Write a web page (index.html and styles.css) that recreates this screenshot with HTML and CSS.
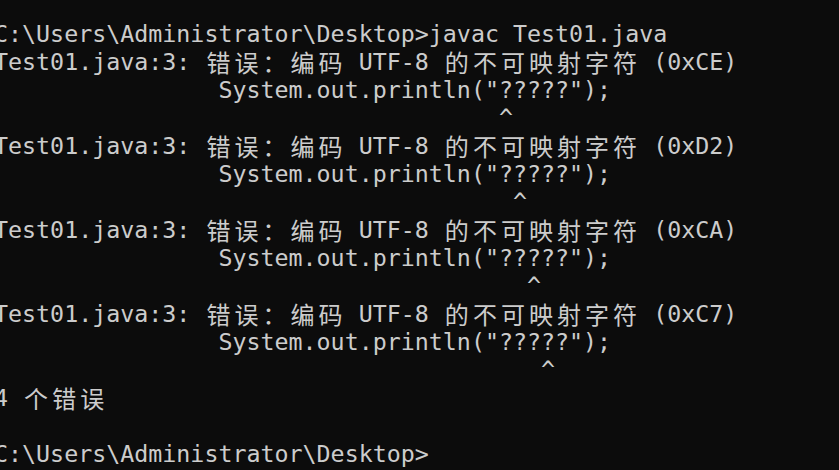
FILE: index.html
```html
<!DOCTYPE html>
<html lang="zh-CN">
<head>
<meta charset="utf-8">
<title>Command Prompt</title>
<link rel="stylesheet" href="styles.css">
</head>
<body>
<div class="term">
<div class="ln">C:\Users\Administrator\Desktop&gt;javac Test01.java</div>
<div class="ln">Test01.java:3: <span class="w">错</span><span class="w">误</span><span class="w">：</span><span class="w">编</span><span class="w">码</span> UTF-8 <span class="w">的</span><span class="w">不</span><span class="w">可</span><span class="w">映</span><span class="w">射</span><span class="w">字</span><span class="w">符</span> (0xCE)</div>
<div class="ln">                System.out.println("?????");</div>
<div class="ln">                                    ^</div>
<div class="ln">Test01.java:3: <span class="w">错</span><span class="w">误</span><span class="w">：</span><span class="w">编</span><span class="w">码</span> UTF-8 <span class="w">的</span><span class="w">不</span><span class="w">可</span><span class="w">映</span><span class="w">射</span><span class="w">字</span><span class="w">符</span> (0xD2)</div>
<div class="ln">                System.out.println("?????");</div>
<div class="ln">                                     ^</div>
<div class="ln">Test01.java:3: <span class="w">错</span><span class="w">误</span><span class="w">：</span><span class="w">编</span><span class="w">码</span> UTF-8 <span class="w">的</span><span class="w">不</span><span class="w">可</span><span class="w">映</span><span class="w">射</span><span class="w">字</span><span class="w">符</span> (0xCA)</div>
<div class="ln">                System.out.println("?????");</div>
<div class="ln">                                      ^</div>
<div class="ln">Test01.java:3: <span class="w">错</span><span class="w">误</span><span class="w">：</span><span class="w">编</span><span class="w">码</span> UTF-8 <span class="w">的</span><span class="w">不</span><span class="w">可</span><span class="w">映</span><span class="w">射</span><span class="w">字</span><span class="w">符</span> (0xC7)</div>
<div class="ln">                System.out.println("?????");</div>
<div class="ln">                                       ^</div>
<div class="ln">4 <span class="w">个</span><span class="w">错</span><span class="w">误</span></div>
<div class="ln"> </div>
<div class="ln">C:\Users\Administrator\Desktop&gt;</div>
</div>
</body>
</html>
```
FILE: styles.css
```css
html, body {
  margin: 0;
  padding: 0;
  background: #0c0c0c;
  overflow: hidden;
}

.term {
  margin-left: -6px;
  padding-top: 20px;
  font-family: "DejaVu Sans Mono", "Liberation Mono", monospace;
  font-size: 23.3px;
  line-height: 28px;
  color: #cccccc;
}

.ln {
  height: 28px;
  white-space: pre;
}

.w {
  display: inline-block;
  width: 28.06px;
  text-align: center;
  font-family: "Noto Sans CJK SC", sans-serif;
  font-size: 24px;
  line-height: 28px;
  vertical-align: top;
}
```
